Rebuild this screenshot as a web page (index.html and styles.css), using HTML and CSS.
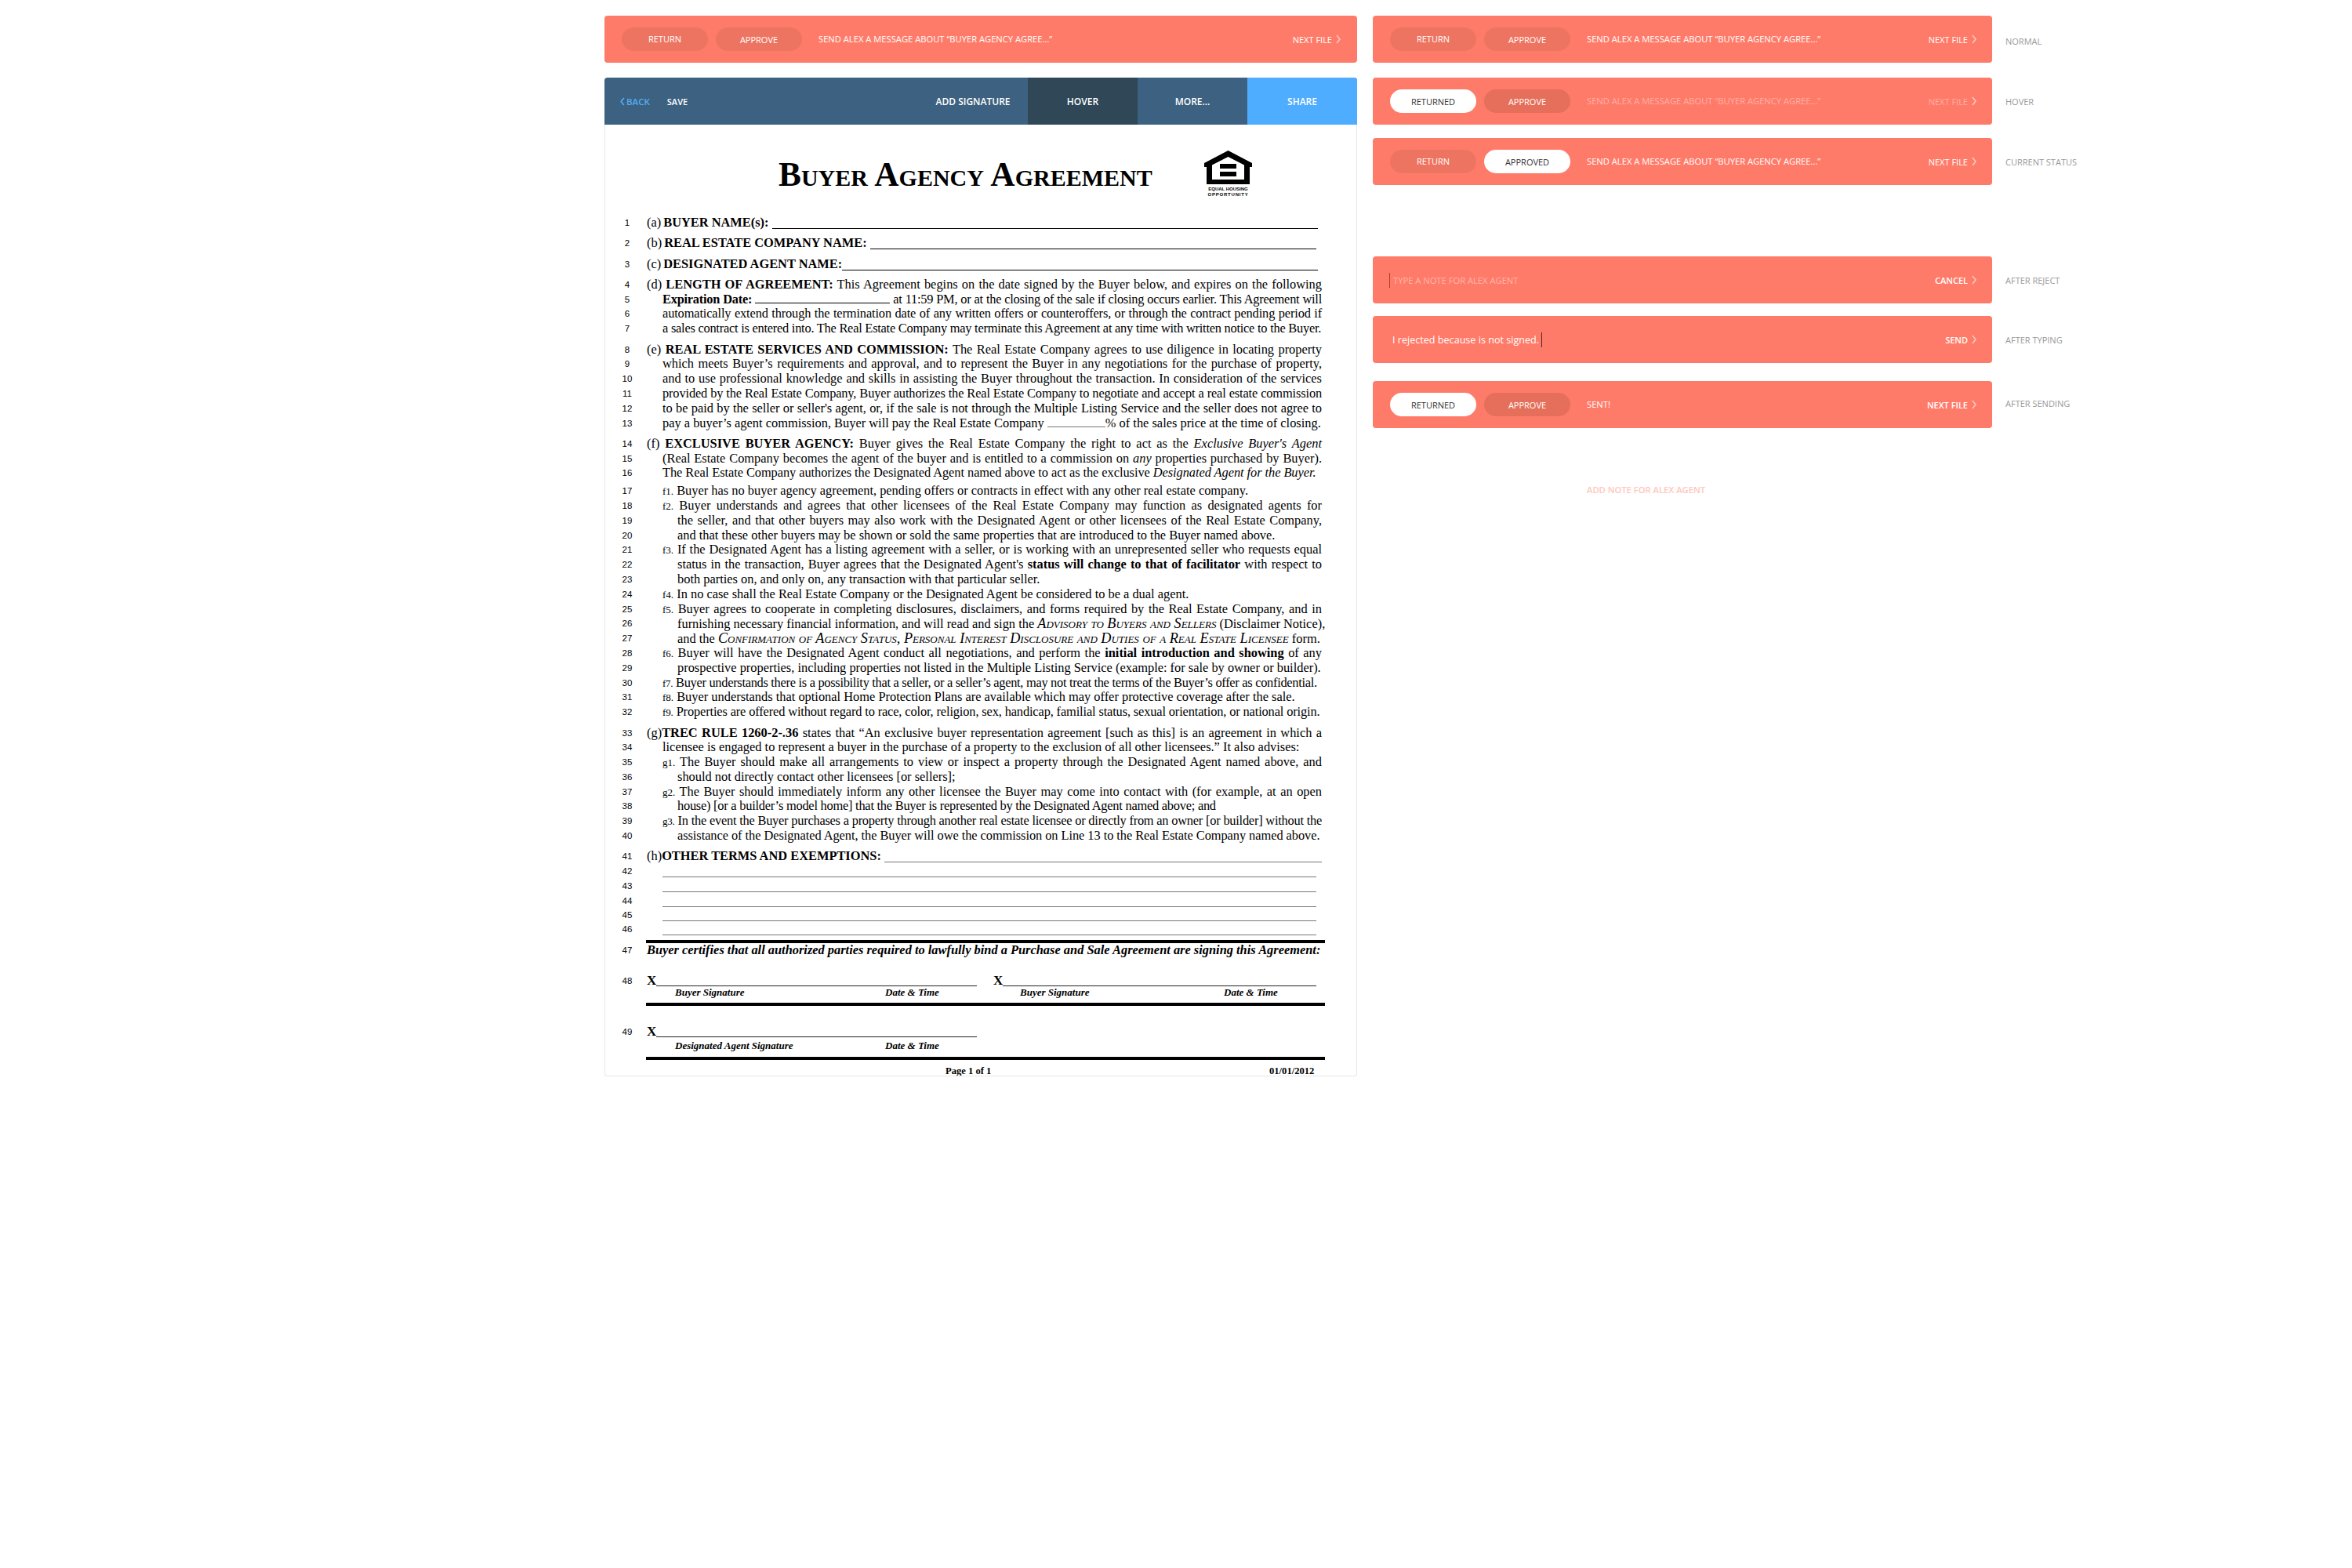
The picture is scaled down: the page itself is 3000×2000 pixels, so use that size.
FILE: index.html
```html
<!DOCTYPE html>
<html>

  <head>
    <meta charset="utf-8"/>
    <title>Buyer Agency Agreement - review bar states</title>
    <link rel="stylesheet" href="styles.css">
  </head>

  <body>

    <div class="page">

      <div class="left">

        <div class="bar">
          <div class="btn idle">RETURN</div>
          <div class="btn">APPROVE</div>
          <div class="msg">SEND ALEX A MESSAGE ABOUT “BUYER AGENCY AGREE...”</div>
          <div class="next">NEXT FILE <svg class="chev" viewBox="0 0 6 12"><polyline points="1,1 5,6 1,11"/></svg></div>
        </div>

        <div class="toolbar">
          <div class="back"><svg class="chev-back" viewBox="0 0 6 12"><polyline points="5,1 1,6 5,11"/></svg> BACK</div>
          <div class="save">SAVE</div>
          <div class="tool tool-first">ADD SIGNATURE</div>
          <div class="tool tool-hover">HOVER</div>
          <div class="tool">MORE...</div>
          <div class="tool tool-share">SHARE</div>
        </div>

        <div class="doc">

          <div class="doc-head">
            <div class="doc-title">Buyer Agency Agreement</div>
            <div class="eho">
              <svg class="eho-house" viewBox="0 0 61 43">
                <path fill-rule="evenodd" d="M30.5 0 L61 16 V21 H58 V43 H3 V21 H0 V16 Z M30.5 8 L10 18.5 V37 H51 V18.5 Z"/>
                <rect x="20" y="17" width="21" height="6"/>
                <rect x="20" y="27" width="21" height="6"/>
              </svg>
              <div class="eho-text">EQUAL HOUSING</div>
              <div class="eho-text eho-wide">OPPORTUNITY</div>
            </div>
          </div>

          <div class="row"><span class="num">1</span><div class="txt fill">(a) <b>BUYER NAME(s):</b>&nbsp;<span class="blank"></span></div></div>
          <div class="row gap"><span class="num">2</span><div class="txt fill">(b) <b>REAL ESTATE COMPANY NAME:</b>&nbsp;<span class="blank end-2"></span></div></div>
          <div class="row gap"><span class="num">3</span><div class="txt fill">(c) <b>DESIGNATED AGENT NAME:</b><span class="blank"></span></div></div>

          <div class="row gap"><span class="num">4</span><div class="txt just">(d) <b>LENGTH OF AGREEMENT:</b> This Agreement begins on the date signed by the Buyer below, and expires on the following</div></div>
          <div class="row"><span class="num">5</span><div class="txt in1 just sq2"><b>Expiration Date:</b> <span class="gapline gapline-date"></span> at 11:59 PM, or at the closing of the sale if closing occurs earlier. This Agreement will</div></div>
          <div class="row"><span class="num">6</span><div class="txt in1 just sqm">automatically extend through the termination date of any written offers or counteroffers, or through the contract pending period if</div></div>
          <div class="row"><span class="num">7</span><div class="txt in1 sq2">a sales contract is entered into. The Real Estate Company may terminate this Agreement at any time with written notice to the Buyer.</div></div>

          <div class="row gap"><span class="num">8</span><div class="txt just">(e) <b>REAL ESTATE SERVICES AND COMMISSION:</b> The Real Estate Company agrees to use diligence in locating property</div></div>
          <div class="row"><span class="num">9</span><div class="txt in1 just">which meets Buyer’s requirements and approval, and to represent the Buyer in any negotiations for the purchase of property,</div></div>
          <div class="row"><span class="num">10</span><div class="txt in1 just">and to use professional knowledge and skills in assisting the Buyer throughout the transaction. In consideration of the services</div></div>
          <div class="row"><span class="num">11</span><div class="txt in1 just sqm">provided by the Real Estate Company, Buyer authorizes the Real Estate Company to negotiate and accept a real estate commission</div></div>
          <div class="row"><span class="num">12</span><div class="txt in1 just sq1">to be paid by the seller or seller's agent, or, if the sale is not through the Multiple Listing Service and the seller does not agree to</div></div>
          <div class="row"><span class="num">13</span><div class="txt in1">pay a buyer’s agent commission, Buyer will pay the Real Estate Company <span class="gapline gapline-pct"></span>% of the sales price at the time of closing.</div></div>

          <div class="row gap"><span class="num">14</span><div class="txt just">(f) <b>EXCLUSIVE BUYER AGENCY:</b> Buyer gives the Real Estate Company the right to act as the <i>Exclusive Buyer's Agent</i></div></div>
          <div class="row"><span class="num">15</span><div class="txt in1 just">(Real Estate Company becomes the agent of the buyer and is entitled to a commission on <i>any</i> properties purchased by Buyer).</div></div>
          <div class="row"><span class="num">16</span><div class="txt in1 sq1">The Real Estate Company authorizes the Designated Agent named above to act as the exclusive <i>Designated Agent for the Buyer.</i></div></div>

          <div class="row gap-s"><span class="num">17</span><div class="txt in1"><span class="mark">f1.</span> Buyer has no buyer agency agreement, pending offers or contracts in effect with any other real estate company.</div></div>
          <div class="row"><span class="num">18</span><div class="txt in1 just"><span class="mark">f2.</span> Buyer understands and agrees that other licensees of the Real Estate Company may function as designated agents for</div></div>
          <div class="row"><span class="num">19</span><div class="txt in2 just">the seller, and that other buyers may also work with the Designated Agent or other licensees of the Real Estate Company,</div></div>
          <div class="row"><span class="num">20</span><div class="txt in2">and that these other buyers may be shown or sold the same properties that are introduced to the Buyer named above.</div></div>
          <div class="row"><span class="num">21</span><div class="txt in1 just"><span class="mark">f3.</span> If the Designated Agent has a listing agreement with a seller, or is working with an unrepresented seller who requests equal</div></div>
          <div class="row"><span class="num">22</span><div class="txt in2 just">status in the transaction, Buyer agrees that the Designated Agent's <b>status will change to that of facilitator</b> with respect to</div></div>
          <div class="row"><span class="num">23</span><div class="txt in2">both parties on, and only on, any transaction with that particular seller.</div></div>
          <div class="row"><span class="num">24</span><div class="txt in1"><span class="mark">f4.</span> In no case shall the Real Estate Company or the Designated Agent be considered to be a dual agent.</div></div>
          <div class="row"><span class="num">25</span><div class="txt in1 just"><span class="mark">f5.</span> Buyer agrees to cooperate in completing disclosures, disclaimers, and forms required by the Real Estate Company, and in</div></div>
          <div class="row"><span class="num">26</span><div class="txt in2 just">furnishing necessary financial information, and will read and sign the <i class="caps">Advisory to Buyers and Sellers</i> (Disclaimer Notice),</div></div>
          <div class="row"><span class="num">27</span><div class="txt in2">and the <i class="caps">Confirmation of Agency Status, Personal Interest Disclosure and Duties of a Real Estate Licensee</i> form.</div></div>
          <div class="row"><span class="num">28</span><div class="txt in1 just"><span class="mark">f6.</span> Buyer will have the Designated Agent conduct all negotiations, and perform the <b>initial introduction and showing</b> of any</div></div>
          <div class="row"><span class="num">29</span><div class="txt in2">prospective properties, including properties not listed in the Multiple Listing Service (example: for sale by owner or builder).</div></div>
          <div class="row"><span class="num">30</span><div class="txt in1 sq3"><span class="mark">f7.</span> Buyer understands there is a possibility that a seller, or a seller’s agent, may not treat the terms of the Buyer’s offer as confidential.</div></div>
          <div class="row"><span class="num">31</span><div class="txt in1"><span class="mark">f8.</span> Buyer understands that optional Home Protection Plans are available which may offer protective coverage after the sale.</div></div>
          <div class="row"><span class="num">32</span><div class="txt in1 sqm"><span class="mark">f9.</span> Properties are offered without regard to race, color, religion, sex, handicap, familial status, sexual orientation, or national origin.</div></div>

          <div class="row gap"><span class="num">33</span><div class="txt just">(g)<b>TREC RULE 1260-2-.36</b> states that “An exclusive buyer representation agreement [such as this] is an agreement in which a</div></div>
          <div class="row"><span class="num">34</span><div class="txt in1">licensee is engaged to represent a buyer in the purchase of a property to the exclusion of all other licensees.” It also advises:</div></div>
          <div class="row"><span class="num">35</span><div class="txt in1 just"><span class="mark">g1.</span> The Buyer should make all arrangements to view or inspect a property through the Designated Agent named above, and</div></div>
          <div class="row"><span class="num">36</span><div class="txt in2">should not directly contact other licensees [or sellers];</div></div>
          <div class="row"><span class="num">37</span><div class="txt in1 just"><span class="mark">g2.</span> The Buyer should immediately inform any other licensee the Buyer may come into contact with (for example, at an open</div></div>
          <div class="row"><span class="num">38</span><div class="txt in2 sq2">house) [or a builder’s model home] that the Buyer is represented by the Designated Agent named above; and</div></div>
          <div class="row"><span class="num">39</span><div class="txt in1 just sq2"><span class="mark">g3.</span> In the event the Buyer purchases a property through another real estate licensee or directly from an owner [or builder] without the</div></div>
          <div class="row"><span class="num">40</span><div class="txt in2 sq1">assistance of the Designated Agent, the Buyer will owe the commission on Line 13 to the Real Estate Company named above.</div></div>

          <div class="row gap"><span class="num">41</span><div class="txt fill">(h)<b class="flush">OTHER TERMS AND EXEMPTIONS:</b>&nbsp;<span class="blank grey full"></span></div></div>
          <div class="row"><span class="num">42</span><div class="txt in1 fill"><span class="blank grey"></span></div></div>
          <div class="row"><span class="num">43</span><div class="txt in1 fill"><span class="blank grey"></span></div></div>
          <div class="row tight"><span class="num">44</span><div class="txt in1 fill"><span class="blank grey"></span></div></div>
          <div class="row tight"><span class="num">45</span><div class="txt in1 fill"><span class="blank grey"></span></div></div>
          <div class="row tight"><span class="num">46</span><div class="txt in1 fill"><span class="blank grey"></span></div></div>

          <div class="rule rule-47"></div>

          <div class="row"><span class="num">47</span><div class="txt certify">Buyer certifies that all authorized parties required to lawfully bind a Purchase and Sale Agreement are signing this Agreement:</div></div>

          <div class="row sign-row"><span class="num">48</span>
            <div class="sign"><b>X</b><span class="blank"></span></div>
            <div class="sign sign-2"><b>X</b><span class="blank"></span></div>
          </div>
          <div class="sign-labels">
            <span class="lab-name">Buyer Signature</span><span class="lab-date">Date &amp; Time</span>
            <span class="lab-name2">Buyer Signature</span><span class="lab-date2">Date &amp; Time</span>
          </div>

          <div class="rule rule-48"></div>

          <div class="row sign-row sign-row-49"><span class="num">49</span>
            <div class="sign"><b>X</b><span class="blank"></span></div>
          </div>
          <div class="sign-labels sign-labels-49">
            <span class="lab-name">Designated Agent Signature</span><span class="lab-date">Date &amp; Time</span>
          </div>

          <div class="rule rule-49"></div>

          <div class="doc-foot">
            <span class="foot-page">Page 1 of 1</span>
            <span class="foot-date">01/01/2012</span>
          </div>

        </div>

      </div>

      <div class="right">

        <div class="state">
          <div class="bar">
            <div class="btn idle">RETURN</div>
            <div class="btn">APPROVE</div>
            <div class="msg">SEND ALEX A MESSAGE ABOUT “BUYER AGENCY AGREE...”</div>
            <div class="next">NEXT FILE <svg class="chev" viewBox="0 0 6 12"><polyline points="1,1 5,6 1,11"/></svg></div>
          </div>
          <div class="label label-normal">NORMAL</div>
        </div>

        <div class="state state-hover">
          <div class="bar">
            <div class="btn on">RETURNED</div>
            <div class="btn dark">APPROVE</div>
            <div class="msg dim">SEND ALEX A MESSAGE ABOUT “BUYER AGENCY AGREE...”</div>
            <div class="next dim">NEXT FILE <svg class="chev" viewBox="0 0 6 12"><polyline points="1,1 5,6 1,11"/></svg></div>
          </div>
          <div class="label">HOVER</div>
        </div>

        <div class="state state-current">
          <div class="bar">
            <div class="btn idle">RETURN</div>
            <div class="btn on">APPROVED</div>
            <div class="msg">SEND ALEX A MESSAGE ABOUT “BUYER AGENCY AGREE...”</div>
            <div class="next">NEXT FILE <svg class="chev" viewBox="0 0 6 12"><polyline points="1,1 5,6 1,11"/></svg></div>
          </div>
          <div class="label">CURRENT STATUS</div>
        </div>

        <div class="state state-reject">
          <div class="bar bar-input">
            <span class="caret caret-red"></span>
            <div class="placeholder">TYPE A NOTE FOR ALEX AGENT</div>
            <div class="next next-plain">CANCEL <svg class="chev" viewBox="0 0 6 12"><polyline points="1,1 5,6 1,11"/></svg></div>
          </div>
          <div class="label">AFTER REJECT</div>
        </div>

        <div class="state state-typing">
          <div class="bar bar-input">
            <div class="typed">I rejected because is not signed.</div>
            <span class="caret caret-dark"></span>
            <div class="next next-plain">SEND <svg class="chev" viewBox="0 0 6 12"><polyline points="1,1 5,6 1,11"/></svg></div>
          </div>
          <div class="label">AFTER TYPING</div>
        </div>

        <div class="state state-sent">
          <div class="bar">
            <div class="btn on">RETURNED</div>
            <div class="btn dark">APPROVE</div>
            <div class="msg">SENT!</div>
            <div class="next next-strong">NEXT FILE <svg class="chev" viewBox="0 0 6 12"><polyline points="1,1 5,6 1,11"/></svg></div>
          </div>
          <div class="label label-high">AFTER SENDING</div>
        </div>

        <div class="add-note">ADD NOTE FOR ALEX AGENT</div>

      </div>

    </div>

  </body>

</html>
```

FILE: styles.css
```css
body
{
margin: 0;
background-color: white;
}

.page
{
display: flex;
gap: 20px;
padding: 20px 0 0 771px;
font-family: "Open Sans", sans-serif;
}

.left, .right
{
width: 960px;
flex: none;
}

.right
{
width: 940px;
}

/* coral review bar */

.bar
{
display: flex;
align-items: center;
width: 100%;
height: 60px;
box-sizing: border-box;
padding: 0 21px 0 22px;
background-color: #FF7B69;
border-radius: 4px;
color: white;
font-size: 11px;
flex: none;
}

.right .bar
{
width: 790px;
padding-right: 20px;
}

.btn
{
width: 110px;
height: 30px;
box-sizing: border-box;
margin-right: 10px;
display: flex;
align-items: center;
justify-content: center;
border-radius: 15px;
background-color: #EE7462;
}

.btn.idle
{
padding-bottom: 2px;
}

.btn.dark
{
background-color: #E56F5A;
}

.btn.on
{
background-color: white;
color: #333333;
}

.msg
{
margin-left: 11px;
padding-bottom: 2px;
font-size: 11.2px;
}

.next
{
margin-left: auto;
display: flex;
align-items: center;
gap: 5px;
}

.next-plain
{
font-weight: 600;
}

.next-strong
{
font-weight: 600;
}

.dim
{
color: rgba(255, 255, 255, 0.4);
}

.chev
{
width: 6px;
height: 12px;
fill: none;
stroke: rgba(255, 255, 255, 0.6);
stroke-width: 1.5;
}

/* input states */

.bar-input
{
padding-left: 21px;
}

.placeholder
{
margin-left: 4px;
font-size: 11.2px;
color: rgba(255, 255, 255, 0.45);
}

.typed
{
font-size: 12.6px;
}

.caret
{
display: block;
width: 1px;
height: 19px;
}

.caret-red
{
background-color: #B03A30;
}

.caret-dark
{
margin-left: 3px;
background-color: #3A2A2A;
}

.bar-input .typed
{
margin-left: 4px;
}

/* state rows */

.state
{
display: flex;
align-items: center;
}

.state-hover
{
margin-top: 19px;
}

.state-current
{
margin-top: 17px;
}

.state-reject
{
margin-top: 91px;
}

.state-typing
{
margin-top: 16px;
}

.state-sent
{
margin-top: 23px;
}

.label
{
margin-left: 17px;
font-size: 11px;
color: #999999;
}

.label-normal
{
padding-top: 5px;
}

.label-high
{
padding-bottom: 4px;
}

.add-note
{
margin: 71px 0 0 273px;
font-size: 11.2px;
font-weight: 600;
color: #FFC6BE;
}

/* blue toolbar */

.toolbar
{
display: flex;
align-items: center;
height: 60px;
margin-top: 19px;
background-color: #3D6180;
border-radius: 4px 4px 0 0;
overflow: hidden;
color: white;
font-size: 12px;
font-weight: 600;
}

.back
{
display: flex;
align-items: center;
gap: 2px;
margin-left: 20px;
color: #55ACF5;
font-size: 11.5px;
}

.chev-back
{
width: 6px;
height: 11px;
fill: none;
stroke: #55ACF5;
stroke-width: 1.8;
}

.save
{
margin-left: 22px;
font-size: 11px;
}

.tool
{
width: 140px;
height: 60px;
display: flex;
align-items: center;
justify-content: center;
}

.tool-first
{
margin-left: auto;
}

.tool-hover
{
background-color: #2F4757;
}

.tool-share
{
background-color: #4FADFF;
}

/* the agreement */

.doc
{
height: 1214px;
box-sizing: border-box;
padding: 0 44px 0 0;
border: 1px solid #E6E6E6;
border-top: none;
border-radius: 0 0 4px 4px;
overflow: hidden;
font-family: "Liberation Serif", serif;
font-size: 16.4px;
line-height: 18.8px;
color: black;
}

.doc-head
{
display: flex;
height: 116px;
box-sizing: border-box;
padding: 33px 0 0 221px;
}

.doc-title
{
width: 543px;
margin-top: 7px;
font-size: 43.3px;
line-height: 46px;
font-weight: bold;
font-variant: small-caps;
white-space: nowrap;
}

.eho
{
display: flex;
flex-direction: column;
align-items: center;
width: 61px;
font-family: "Liberation Sans", sans-serif;
}

.eho-house
{
width: 61px;
height: 43px;
flex: none;
margin-bottom: 3px;
}

.eho-text
{
font-size: 6px;
line-height: 7px;
font-weight: bold;
white-space: nowrap;
}

.eho-wide
{
letter-spacing: 0.8px;
}

.row
{
display: flex;
height: 18.8px;
white-space: nowrap;
}

.gap
{
margin-top: 7.5px;
}

.gap-s
{
margin-top: 4px;
}

.tight
{
height: 18px;
}

.num
{
width: 32px;
margin-left: 12px;
margin-right: 9px;
flex: none;
text-align: center;
font-family: "Liberation Sans", sans-serif;
font-size: 11.5px;
}

.txt
{
flex: 1;
min-width: 0;
}

.just
{
text-align: justify;
text-align-last: justify;
}

/* the source PDF squeezes some lines a little */

.sq1
{
letter-spacing: -0.06px;
}

.sqm
{
letter-spacing: -0.14px;
}

.sq2
{
letter-spacing: -0.24px;
}

.sq3
{
letter-spacing: -0.29px;
}

.in1
{
padding-left: 20px;
}

.in2
{
padding-left: 39px;
}

.mark
{
font-size: 13px;
}

.caps
{
font-size: 18.2px;
font-variant: small-caps;
}

.fill
{
display: flex;
}

.fill > b
{
margin-left: 3px;
}

.fill > b.flush
{
margin-left: 0;
}

.blank
{
flex: 1;
height: 16px;
margin-right: 5px;
border-bottom: 1.5px solid black;
}

.end-2
{
margin-right: 7px;
}

.blank.grey
{
margin-right: 7px;
border-bottom: 1.5px solid #777777;
}

.blank.full
{
margin-right: 0;
}

.gapline
{
display: inline-block;
vertical-align: baseline;
border-bottom: 1px solid black;
}

.gapline-date
{
width: 172px;
}

.gapline-pct
{
width: 74px;
border-bottom-color: #777777;
}

.rule
{
height: 4px;
margin: 5px 0 0 52px;
width: 866px;
background-color: black;
}

.certify
{
font-weight: bold;
font-style: italic;
}

.sign-row
{
margin-top: 20px;
height: 16px;
}

.sign
{
display: flex;
width: 421px;
font-size: 17px;
}

.sign-2
{
width: 412px;
margin-left: 21px;
}

.sign .blank
{
height: 15px;
margin: 0;
border-bottom: 1.5px solid #222222;
}

.sign-labels
{
position: relative;
height: 16px;
font-size: 13px;
font-weight: bold;
font-style: italic;
line-height: 16px;
}

.sign-labels span
{
position: absolute;
top: 0;
white-space: nowrap;
}

.lab-name
{
left: 89px;
}

.lab-date
{
left: 357px;
}

.lab-name2
{
left: 529px;
}

.lab-date2
{
left: 789px;
}

.rule-48
{
margin-top: 5px;
}

.sign-row-49
{
margin-top: 24px;
}

.sign-labels-49
{
margin-top: 3px;
}

.rule-49
{
margin-top: 6px;
}

.doc-foot
{
position: relative;
height: 16px;
margin-top: 6px;
font-size: 12.6px;
font-weight: bold;
line-height: 16px;
}

.doc-foot span
{
position: absolute;
top: 0;
}

.foot-page
{
left: 434px;
}

.foot-date
{
left: 847px;
}
```
